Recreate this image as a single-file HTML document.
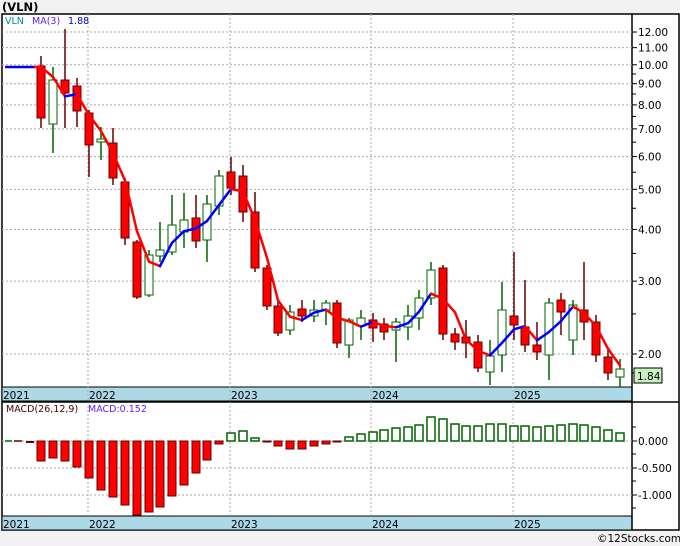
<!DOCTYPE html>
<html><head><meta charset="utf-8"><style>
body{margin:0;width:680px;height:546px;background:#f2f2f2;overflow:hidden;font-family:"DejaVu Sans",sans-serif}
svg{position:absolute;left:0;top:0}
</style></head><body>
<svg id="s" width="680" height="546" xmlns="http://www.w3.org/2000/svg" font-family="DejaVu Sans, sans-serif">
<rect x="0" y="0" width="680" height="546" fill="#f2f2f2"/>
<rect x="2" y="14" width="677" height="516" fill="#fff" stroke="#000" stroke-width="1.5"/>
<text x="2" y="11" font-size="11.5" font-weight="bold" fill="#000">(VLN)</text>
<rect x="2" y="387" width="630" height="14" fill="#add8e6" stroke="#000"/>
<rect x="2" y="516" width="630" height="14" fill="#add8e6" stroke="#000"/>
<line x1="2" y1="402" x2="679" y2="402" stroke="#000" stroke-width="1.5"/>
<line x1="632" y1="14" x2="632" y2="530" stroke="#000" stroke-width="1.5"/>
<g id="g"></g>
<text x="5" y="24" font-size="9.5" fill="#008b8b">VLN</text>
<text x="32" y="24" font-size="9.5" fill="#6020ff">MA(3)</text>
<text x="68" y="24" font-size="9.5" fill="#0000cc">1.88</text>
<text x="6" y="412" font-size="9.5" fill="#400">MACD(26,12,9)</text>
<text x="88" y="412" font-size="9.5" fill="#6020ff">MACD:0.152</text>
<rect x="634" y="368" width="28" height="15" fill="#c8f0c0" stroke="#000"/>
<text x="637" y="380" font-size="10.5" fill="#000">1.84</text>
<text x="597" y="542" font-size="10.5" fill="#000">©12Stocks.com</text>
</svg>
<script>
var g=document.getElementById('g'),h='';
function Y(p){return 354-(Math.log(p)-Math.log(2))*179.7}
function P(y){return Math.exp((354-y)/179.7+Math.log(2))}
[2,3,4,5,6,7,8,9,10,11,12].forEach(function(p){var y=Y(p);h+='<line x1="2" x2="632" y1="'+y+'" y2="'+y+'" stroke="#aaa" stroke-dasharray="2,2"/>';h+='<line x1="632" x2="637" y1="'+y+'" y2="'+y+'" stroke="#000"/>';h+='<text x="638" y="'+(y+4)+'" font-size="10.5" fill="#000">'+p.toFixed(2)+'</text>';});
[1.8,2.5,3.5,4.5,5.5,6.5,7.5,8.5,9.5].forEach(function(p){var y=Y(p);h+='<line x1="632" x2="636" y1="'+y+'" y2="'+y+'" stroke="#000"/>';});
var yrs=[[2,'2021'],[88,'2022'],[230,'2023'],[371,'2024'],[513,'2025']];
yrs.forEach(function(a){if(a[0]>2){h+='<line x1="'+a[0]+'" x2="'+a[0]+'" y1="14" y2="516" stroke="#aaa" stroke-dasharray="2,2"/>';}
h+='<text x="'+(a[0]+1)+'" y="399" font-size="10.5" fill="#000">'+a[1]+'</text><text x="'+(a[0]+1)+'" y="528" font-size="10.5" fill="#000">'+a[1]+'</text>';});
[[441,'0.000'],[468,'-0.500'],[495,'-1.000']].forEach(function(a){h+='<line x1="2" x2="632" y1="'+a[0]+'" y2="'+a[0]+'" stroke="#aaa" stroke-dasharray="2,2"/><line x1="632" x2="637" y1="'+a[0]+'" y2="'+a[0]+'" stroke="#000"/><text x="638" y="'+(a[0]+4)+'" font-size="10.5" fill="#000">'+a[1]+'</text>';});
[427,454,481,508].forEach(function(y){h+='<line x1="632" x2="636" y1="'+y+'" y2="'+y+'" stroke="#000"/>';});
var C=[[41,66,118,56,128,0],[53,80,124,67,153,1],[65,80,93,29,128,0],[77,86,111,78,127,0],[89,113,145,110,177,0],[101,139,142,127,160,1],[113,143,178,128,185,0],[125,182,238,178,245,0],[137,242,297,240,299,0],[149,255,295,250,297,1],[160,250,256,222,262,1],[172,225,252,195,255,1],[184,220,232,193,248,1],[196,218,241,195,248,0],[207,204,240,195,262,1],[219,176,206,170,215,1],[231,172,188,157,195,0],[243,176,212,165,222,0],[255,212,268,192,272,0],[267,268,306,265,310,0],[278,306,333,300,336,0],[290,312,330,305,335,1],[302,309,316,300,322,0],[314,310,316,300,322,1],[326,303,310,300,325,1],[337,303,343,300,348,0],[349,320,345,318,358,1],[361,318,326,310,340,1],[373,320,328,313,342,0],[384,324,332,318,340,0],[396,322,330,318,362,1],[408,316,327,305,340,1],[419,298,318,290,330,1],[431,270,298,262,305,1],[443,268,334,265,340,0],[455,334,342,328,350,0],[466,337,343,320,358,0],[478,342,368,335,372,0],[490,356,372,340,385,1],[502,310,355,282,372,1],[514,316,325,252,340,0],[525,327,345,280,352,0],[537,345,352,322,360,0],[549,303,355,298,380,1],[561,300,312,293,335,0],[573,305,340,300,355,1],[584,310,322,262,340,0],[596,322,355,315,362,0],[608,357,373,348,380,0],[620,369,377,359,387,1]];
C.forEach(function(c){var col=c[5]?'#006400':'#600';h+='<line x1="'+c[0]+'" x2="'+c[0]+'" y1="'+c[3]+'" y2="'+c[4]+'" stroke="'+col+'" stroke-width="1.5"/>';
h+='<rect x="'+(c[0]-4)+'" y="'+c[1]+'" width="8" height="'+Math.max(2,c[2]-c[1])+'" fill="'+(c[5]?'#fff':'#f00')+'" stroke="'+col+'"/>';});
var cl=C.map(function(c){return P(c[5]?c[1]:c[2])});
var pts=[[5,67],[35,67]];
for(var i=0;i<C.length;i++){var a=cl[Math.max(0,i-2)],b=cl[Math.max(0,i-1)];var m=(a+b+cl[i])/3;if(i<2)m=P(67+i*10);pts.push([C[i][0],Y(m)]);}
h+='<line x1="5" y1="67" x2="35" y2="67" stroke="#00f" stroke-width="2.5"/>';
for(var i=2;i<pts.length;i++){var p=pts[i-1],q=pts[i];h+='<line x1="'+p[0]+'" y1="'+p[1]+'" x2="'+q[0]+'" y2="'+q[1]+'" stroke="'+(q[1]<p[1]?'#00f':'#f00')+'" stroke-width="2.5" stroke-linecap="round"/>';}
h+='<line x1="5" x2="12" y1="441" y2="441" stroke="#006400" stroke-width="1.5"/><line x1="14" x2="22" y1="441" y2="441" stroke="#600" stroke-width="1.5"/><line x1="26" x2="34" y1="442" y2="442" stroke="#600" stroke-width="2"/>';
var M=[461,458,461,467,478,490,497,505,515,512,507,496,485,473,460,444,433,431,438,442,446,449,449,446,444,442,437,434,432,430,428,427,425,417,419,424,426,426,424,424,426,426,427,426,425,424,425,427,430,433];
M.forEach(function(v,i){var x=C[i][0]-4;if(v>441)h+='<rect x="'+x+'" y="441" width="8" height="'+(v-441)+'" fill="#f00" stroke="#600"/>';else h+='<rect x="'+x+'" y="'+v+'" width="8" height="'+Math.max(1,441-v)+'" fill="#fff" stroke="#006400" stroke-width="1.5"/>';});
g.innerHTML=h;
</script>
</body></html>
